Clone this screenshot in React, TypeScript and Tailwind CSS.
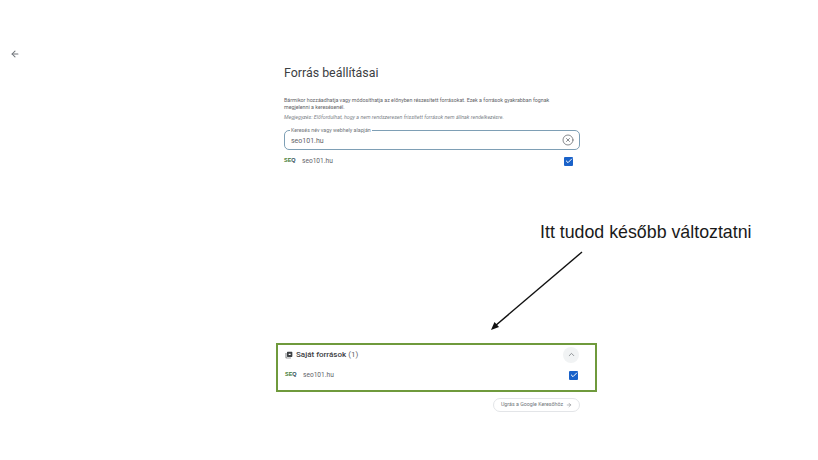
import { ArrowLeft, ArrowRight, ChevronUp, CircleX, Check } from 'lucide-react';

function SeoLogo() {
  return (
    <span className="flex w-[18px] items-center font-['Liberation_Sans',sans-serif] text-[5.5px] font-bold leading-none text-[#3f7a34]">
      SE<span className="text-[#2f4f5a]">Q</span>
    </span>
  );
}

function SourceRow() {
  return (
    <div className="flex items-center">
      <SeoLogo />
      <span className="text-[6.6px] leading-[10px] text-[#5f6368]">seo101.hu</span>
      <span className="ml-auto flex h-[9px] w-[9px] items-center justify-center rounded-[1px] bg-[#1a62c9]">
        <Check size={8} strokeWidth={3} className="text-white" />
      </span>
    </div>
  );
}

export default function App() {
  return (
    <div className="relative h-[460px] w-[818px] overflow-hidden bg-white font-['Roboto',sans-serif]">
      {/* Back */}
      <div className="absolute left-[10px] top-[49px]">
        <ArrowLeft size={10} strokeWidth={2.5} className="text-[#70757a]" />
      </div>

      {/* Main column */}
      <div className="ml-[284px] flex w-[296px] flex-col pt-[65px]">
        <h1 className="text-[12.4px] font-normal leading-[16px] text-[#3c4043]">Forrás beállításai</h1>

        <p className="mt-[16px] text-[5.3px] leading-[7px] text-[#5f6368]">
          Bármikor hozzáadhatja vagy módosíthatja az előnyben részesített forrásokat. Ezek a források gyakrabban fognak
          <br />
          megjelenni a keresésenél.
        </p>
        <p className="mt-[3px] text-[5.3px] italic leading-[7px] text-[#80868b]">
          Megjegyzés: Előfordulhat, hogy a nem rendszeresen frissített források nem állnak rendelkezésre.
        </p>

        <div className="relative mt-[9px] flex h-[20px] items-center rounded-[5px] border border-[#7e9fb5] pl-[6px] pr-[5px]">
          <span className="absolute -top-[4px] left-[5px] bg-white px-[1px] text-[5.3px] leading-[7px] text-[#70757a]">
            Keresés név vagy webhely alapján
          </span>
          <span className="pt-[1px] text-[7px] leading-[10px] text-[#5f6368]">seo101.hu</span>
          <CircleX size={12} strokeWidth={1.5} className="ml-auto text-[#5f6368]" />
        </div>

        <div className="mt-[6px] pr-[7px]">
          <SourceRow />
        </div>
      </div>

      {/* Saved sources */}
      <div className="ml-[276px] mt-[177px] flex h-[49px] w-[321px] flex-col border-2 border-[#6f9a3c] pl-[7px] pr-[17px]">
        <div className="mt-[1px] flex h-[17px] items-center">
          <svg width="8" height="8" viewBox="0 0 24 24" className="mr-[3px] text-[#3c4043]" fill="currentColor">
            <path d="M4 6H2v14a2 2 0 0 0 2 2h14v-2H4V6zm16-4H8a2 2 0 0 0-2 2v12a2 2 0 0 0 2 2h12a2 2 0 0 0 2-2V4a2 2 0 0 0-2-2zm-3 10h-6V8h6v4z" />
          </svg>
          <span className="text-[8px] font-medium leading-[12px] text-[#3c4043]">
            Saját források <span className="font-normal text-[#5f6368]">(1)</span>
          </span>
          <span className="-mr-[1px] ml-auto flex h-[16px] w-[16px] items-center justify-center rounded-full bg-[#f1f3f4]">
            <ChevronUp size={9} className="text-[#70757a]" />
          </span>
        </div>
        <div className="mt-[7px]">
          <SourceRow />
        </div>
      </div>

      <div className="ml-[493px] mt-[6px] flex h-[14px] w-[87px] items-center justify-center gap-[3px] rounded-full border border-[#e3e5e8] text-[5.3px] text-[#70757a]">
        Ugrás a Google Keresőhöz
        <ArrowRight size={6} />
      </div>

      {/* Annotation */}
      <div className="absolute left-[540px] top-[222px] whitespace-nowrap font-['Liberation_Sans',sans-serif] text-[17.8px] leading-[21px] text-[#1a1a1a]">
        Itt tudod később változtatni
      </div>
      <svg className="absolute left-[485px] top-[248px]" width="100" height="85" viewBox="0 0 100 85">
        <path d="M97 4 L10 78" stroke="#111" strokeWidth="1.4" fill="none" />
        <path d="M6 82 L9.5 74 L14 79 Z" fill="#111" />
      </svg>
    </div>
  );
}
